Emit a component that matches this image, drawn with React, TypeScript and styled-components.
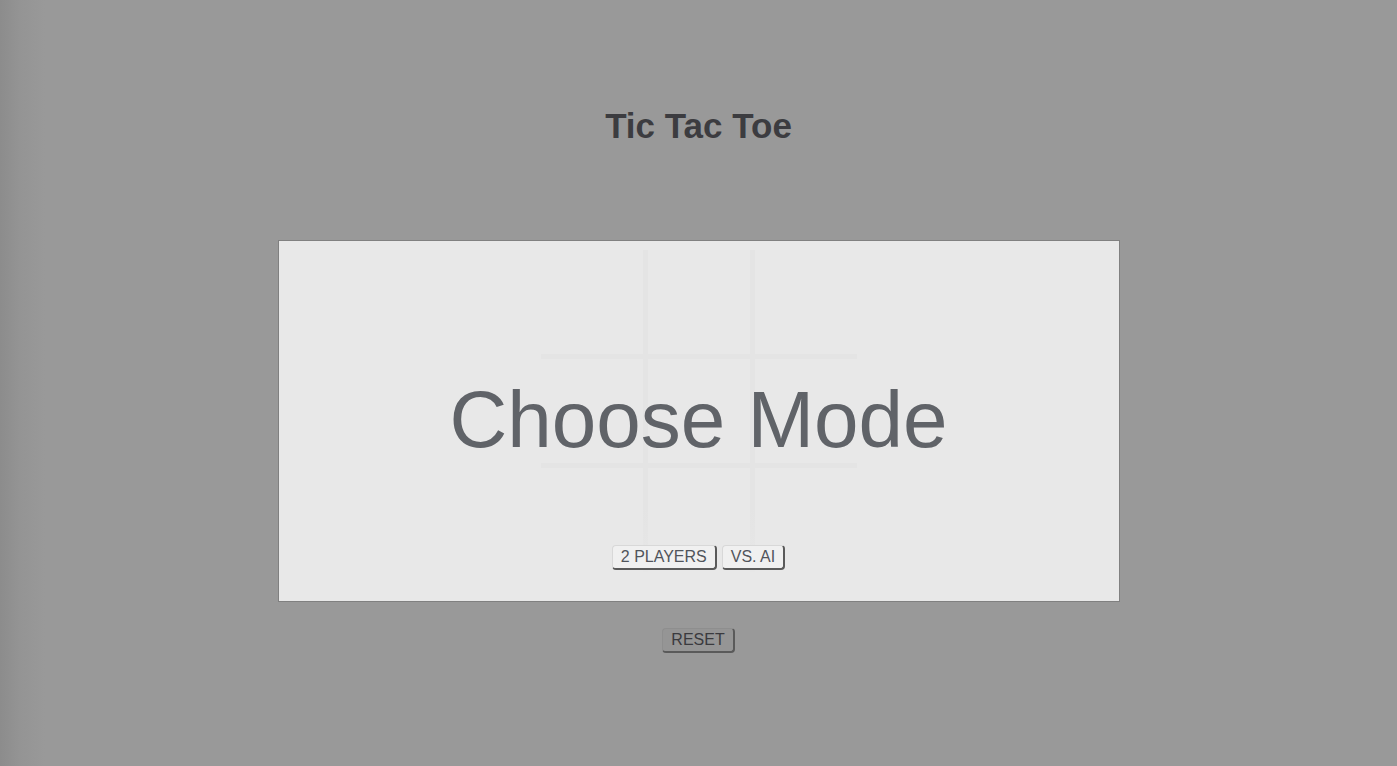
import React from "react";
import styled, { createGlobalStyle } from "styled-components";

const Global = createGlobalStyle`
  html, body {
    margin: 0;
    padding: 0;
  }
  body {
    min-height: 100vh;
    background: linear-gradient(to right, #8c8c8c 0px, #949494 20px, #999999 45px, #999999 100%);
    font-family: "Liberation Sans", Arial, Helvetica, sans-serif;
  }
`;

const Page = styled.main`
  display: flex;
  flex-direction: column;
  align-items: center;
  padding-top: 106px;
  min-height: 100vh;
  box-sizing: border-box;
`;

const Title = styled.h1`
  margin: 0;
  font-size: 35px;
  line-height: 40px;
  font-weight: bold;
  color: #3c3c40;
`;

const Board = styled.section`
  margin-top: 94px;
  width: 840px;
  height: 360px;
  border: 1px solid #808080;
  background: #e8e8e8;
  display: grid;
  grid-template-areas: "stack";
`;

const FaintGrid = styled.div`
  grid-area: stack;
  align-self: start;
  justify-self: center;
  margin-top: 9px;
  width: 316px;
  height: 322px;
  display: grid;
  grid-template-columns: repeat(3, 1fr);
  grid-template-rows: repeat(3, 1fr);
  gap: 5px;
  background: linear-gradient(to bottom, #e4e4e4 0%, #e4e4e4 80%, #e7e7e7 100%);
`;

const FaintCell = styled.div`
  background: #e8e8e8;
`;

const Overlay = styled.div`
  grid-area: stack;
  display: flex;
  flex-direction: column;
  align-items: center;
  padding-top: 139px;
`;

const Heading = styled.h2`
  margin: 0;
  font-size: 80px;
  line-height: 80px;
  font-weight: normal;
  color: #606368;
`;

const ModeRow = styled.div`
  display: flex;
  gap: 5px;
  margin-top: 85px;
`;

const Button = styled.button<{ $dim?: boolean }>`
  font-family: "Liberation Sans", Arial, Helvetica, sans-serif;
  font-size: 16px;
  line-height: 18px;
  padding: 2px 8px 2px;
  border: 1px solid ${(p) => (p.$dim ? "#8e8e8e" : "#d8d8d8")};
  border-right: 2px solid #5a5a5a;
  border-bottom: 2px solid #5a5a5a;
  border-radius: 4px;
  background: ${(p) => (p.$dim ? "#959595" : "#f0f0f0")};
  color: ${(p) => (p.$dim ? "#3a3a3e" : "#50545b")};
  cursor: pointer;
`;

const ResetRow = styled.div`
  margin-top: 26px;
`;

export default function App() {
  return (
    <>
      <Global />
      <Page>
        <Title>Tic Tac Toe</Title>
        <Board>
          <FaintGrid>
            {Array.from({ length: 9 }).map((_, i) => (
              <FaintCell key={i} />
            ))}
          </FaintGrid>
          <Overlay>
            <Heading>Choose Mode</Heading>
            <ModeRow>
              <Button>2 PLAYERS</Button>
              <Button>VS. AI</Button>
            </ModeRow>
          </Overlay>
        </Board>
        <ResetRow>
          <Button $dim>RESET</Button>
        </ResetRow>
      </Page>
    </>
  );
}
